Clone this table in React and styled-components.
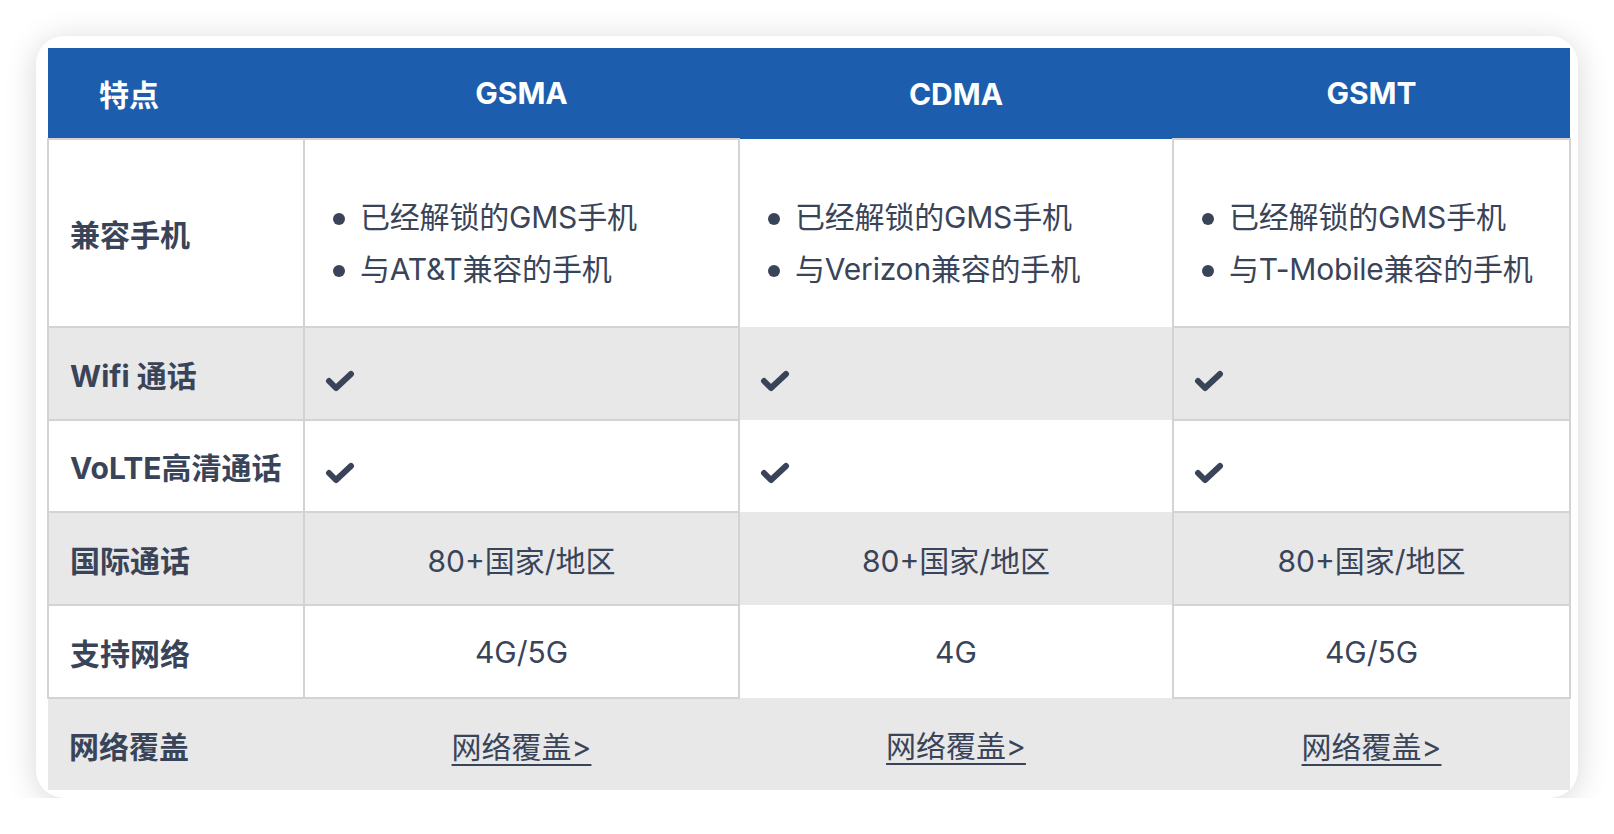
import styled, { createGlobalStyle } from "styled-components";

const GlobalStyle = createGlobalStyle`
  body {
    margin: 0;
    background: #ffffff;
    font-family: Inter, "Noto Sans CJK SC", sans-serif;
  }
`;

const Card = styled.div`
  width: 1542px;
  height: 762px;
  margin: 36px 0 0 36px;
  padding: 12px 0 0 11px;
  box-sizing: border-box;
  background: #ffffff;
  border-radius: 28px;
  overflow: hidden;
  box-shadow: 0 4px 32px rgba(0, 0, 0, 0.16);
`;

const Table = styled.table`
  width: 1522px;
  border-collapse: collapse;
  table-layout: fixed;
  color: #3a4459;
  font-size: 30px;
`;

const HeadCell = styled.th`
  height: 90px;
  padding: 0 0 0 ${(p) => (p.$left ? "51px" : "0")};
  background: #1c5ead;
  color: #ffffff;
  font-weight: 700;
  text-align: ${(p) => (p.$left ? "left" : "center")};
`;

const Row = styled.tr`
  height: ${(p) => p.$height}px;
  background: ${(p) => (p.$shade ? "#e8e8e8" : "#ffffff")};
`;

const Label = styled.td`
  padding: 0 0 0 21px;
  font-weight: 700;
  border: ${(p) => (p.$plain ? "none" : "2px solid #d3d3d3")};
`;

const Cell = styled.td`
  padding: ${(p) => p.$pad || "0"};
  text-align: ${(p) => (p.$center ? "center" : "left")};
  border: ${(p) => (p.$plain ? "none" : "2px solid #d3d3d3")};
`;

const List = styled.ul`
  margin: 0;
  padding: 0;
  list-style: none;
`;

const Item = styled.li`
  display: flex;
  align-items: center;
  gap: 15px;
  line-height: 52px;
  letter-spacing: -0.2px;

  &::before {
    content: "";
    width: 12px;
    height: 12px;
    margin-top: 4px;
    border-radius: 50%;
    background: #3a4459;
    flex: none;
  }
`;

const Link = styled.a`
  color: #3a4459;
  text-decoration: underline;
  text-decoration-thickness: 2px;
  text-underline-offset: 6px;
`;

const Check = () => (
  <svg width="30" height="22" viewBox="0 0 30 22" style={{ display: "block" }}>
    <polyline
      points="4,11 11,18 26,4"
      fill="none"
      stroke="#3a4459"
      strokeWidth="6"
      strokeLinecap="round"
      strokeLinejoin="round"
    />
  </svg>
);

const plans = [
  { name: "GSMA", phones: ["已经解锁的GMS手机", "与AT&T兼容的手机"], net: "4G/5G" },
  { name: "CDMA", phones: ["已经解锁的GMS手机", "与Verizon兼容的手机"], net: "4G", plain: true },
  { name: "GSMT", phones: ["已经解锁的GMS手机", "与T-Mobile兼容的手机"], net: "4G/5G" },
];

const App = () => {
  return (
    <>
      <GlobalStyle />
      <Card>
        <Table>
          <colgroup>
            <col style={{ width: 256 }} />
            <col style={{ width: 435 }} />
            <col style={{ width: 434 }} />
            <col style={{ width: 397 }} />
          </colgroup>
          <thead>
            <tr>
              <HeadCell $left>特点</HeadCell>
              {plans.map((p) => (
                <HeadCell key={p.name}>{p.name}</HeadCell>
              ))}
            </tr>
          </thead>
          <tbody>
            <Row $height={188}>
              <Label>兼容手机</Label>
              {plans.map((p) => (
                <Cell key={p.name} $plain={p.plain} $pad="20px 0 0 28px">
                  <List>
                    {p.phones.map((t) => (
                      <Item key={t}>{t}</Item>
                    ))}
                  </List>
                </Cell>
              ))}
            </Row>
            <Row $height={93} $shade>
              <Label>Wifi 通话</Label>
              {plans.map((p) => (
                <Cell key={p.name} $plain={p.plain} $pad="14px 0 0 20px">
                  <Check />
                </Cell>
              ))}
            </Row>
            <Row $height={92}>
              <Label>VoLTE高清通话</Label>
              {plans.map((p) => (
                <Cell key={p.name} $plain={p.plain} $pad="14px 0 0 20px">
                  <Check />
                </Cell>
              ))}
            </Row>
            <Row $height={93} $shade>
              <Label>国际通话</Label>
              {plans.map((p) => (
                <Cell key={p.name} $plain={p.plain} $center>
                  80+国家/地区
                </Cell>
              ))}
            </Row>
            <Row $height={93}>
              <Label>支持网络</Label>
              {plans.map((p) => (
                <Cell key={p.name} $plain={p.plain} $center>
                  {p.net}
                </Cell>
              ))}
            </Row>
            <Row $height={92} $shade>
              <Label $plain>网络覆盖</Label>
              {plans.map((p) => (
                <Cell key={p.name} $plain $center>
                  <Link href="#">网络覆盖&gt;</Link>
                </Cell>
              ))}
            </Row>
          </tbody>
        </Table>
      </Card>
    </>
  );
};

export default App;
